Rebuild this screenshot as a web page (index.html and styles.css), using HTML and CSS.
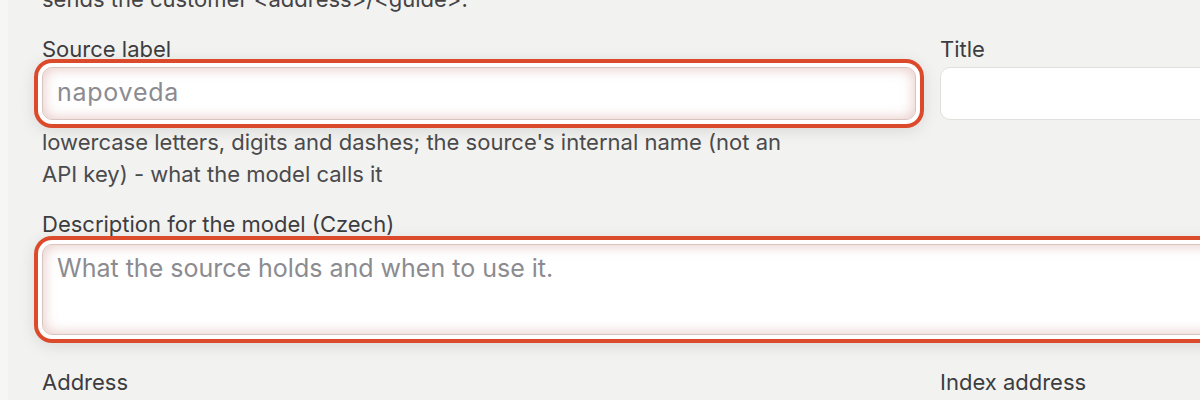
FILE: index.html
```html
<!DOCTYPE html>
<html lang="en">
<head>
<meta charset="utf-8">
<title>Source form</title>
<link rel="stylesheet" href="styles.css">
</head>
<body>
<div class="page">
  <div class="gutter"></div>
  <main class="main">
    <p class="intro">sends the customer &lt;address&gt;/&lt;guide&gt;.</p>
    <div class="row row-first">
      <div class="field">
        <label class="label" for="src">Source label</label>
        <input id="src" class="input input-code flagged" type="text" placeholder="napoveda">
        <p class="help">lowercase letters, digits and dashes; the source's internal name (not an API key) - what the model calls it</p>
      </div>
      <div class="field">
        <label class="label" for="title">Title</label>
        <input id="title" class="input" type="text">
      </div>
    </div>
    <div class="field field-wide">
      <label class="label" for="desc">Description for the model (Czech)</label>
      <textarea id="desc" class="input textarea flagged" placeholder="What the source holds and when to use it."></textarea>
    </div>
    <div class="row row-next">
      <div class="field">
        <label class="label" for="addr">Address</label>
        <input id="addr" class="input" type="text">
      </div>
      <div class="field">
        <label class="label" for="idx">Index address</label>
        <input id="idx" class="input" type="text">
      </div>
    </div>
  </main>
</div>
</body>
</html>
```

FILE: styles.css
```css
* { box-sizing: border-box; }

html, body {
  margin: 0;
  padding: 0;
  background: #f2f2f0;
  overflow: hidden;
  font-family: Inter, "Liberation Sans", sans-serif;
  color: #3d3d3f;
}

.page {
  display: flex;
  width: 1500px;
  height: 400px;
}

.gutter {
  width: 8px;
  flex: none;
  background: #f6f6f5;
}

.main {
  flex: none;
  width: 1400px;
  padding-left: 34px;
}

.intro {
  margin: -17px 0 0;
  font-size: 22px;
  line-height: 32px;
  color: #444446;
}

.row {
  display: grid;
  grid-template-columns: 874px 1fr;
  column-gap: 24px;
}

.field {
  display: flex;
  flex-direction: column;
}

.label {
  display: block;
  font-size: 22px;
  line-height: 28px;
  margin-top: 22px;
  margin-bottom: 4px;
  color: #3d3d40;
}

.row-first .label {
  margin-top: 20px;
}

.input {
  display: block;
  width: 100%;
  height: 53px;
  margin: 0;
  padding: 0 14px 3px;
  border: 1px solid #e2e0dc;
  border-radius: 10px;
  background: #ffffff;
  font-family: Inter, "Liberation Sans", sans-serif;
  font-size: 25px;
  color: #3d3d40;
  outline: none;
}

.input::placeholder {
  color: #8b8b90;
  opacity: 1;
}

.input-code {
  letter-spacing: 0.03em;
}

.flagged {
  border-color: #d9c4c0;
  box-shadow:
    inset 0 0 14px rgba(185, 105, 95, 0.40),
    0 0 0 4px #ffffff,
    0 0 0 8px #dc4a2c,
    0 3px 16px 8px rgba(0, 0, 0, 0.10);
}

.help {
  margin: 6px 0 0;
  max-width: 750px;
  font-size: 22px;
  line-height: 32px;
  color: #4a4a4c;
}

.field-wide .label {
  margin-top: 20px;
  margin-bottom: 6px;
}

.textarea {
  height: 91px;
  padding: 8px 14px;
  resize: none;
  line-height: 30px;
}

.row-next .label {
  margin-top: 33px;
}
```
